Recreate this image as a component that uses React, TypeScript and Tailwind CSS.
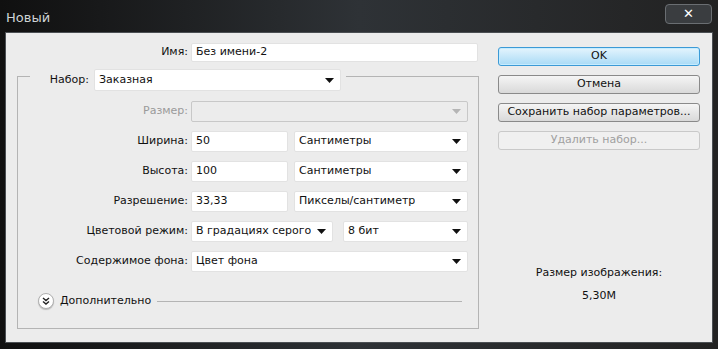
import React from 'react';

const font = { fontFamily: '"DejaVu Sans", "Liberation Sans", sans-serif' };

const Arrow: React.FC<{ disabled?: boolean }> = ({ disabled }) => (
  <svg width="9" height="5" viewBox="0 0 9 5" className="shrink-0">
    <path d="M0 0H9L4.5 5Z" fill={disabled ? '#b5b5b5' : '#111'} />
  </svg>
);

const Select: React.FC<{ value?: string; width: string; disabled?: boolean }> = ({ value, width, disabled }) => (
  <div
    className={`${width} h-full flex items-center justify-between pl-[4px] pr-[6px] border rounded-[2px] ${
      disabled ? 'bg-[#ececec] border-[#c8c8c8]' : 'bg-white border-[#e2e2e2]'
    }`}
  >
    <span className="truncate">{value}</span>
    <Arrow disabled={disabled} />
  </div>
);

const Input: React.FC<{ value: string; width: string }> = ({ value, width }) => (
  <div className={`${width} h-full flex items-center pl-[4px] bg-white border border-[#e2e2e2] rounded-[2px]`}>
    {value}
  </div>
);

const Row: React.FC<{ label: string; disabled?: boolean; children: React.ReactNode }> = ({ label, disabled, children }) => (
  <div className="flex h-[21px] items-center">
    <div className={`w-[173px] text-right pr-[3px] ${disabled ? 'text-[#9a9a9a]' : ''}`}>{label}</div>
    <div className="flex h-full gap-[6px]">{children}</div>
  </div>
);

const Button: React.FC<{ children: React.ReactNode; primary?: boolean; disabled?: boolean }> = ({ children, primary, disabled }) => (
  <div
    className={`h-[19px] flex items-center justify-center rounded-[3px] border ${
      primary
        ? 'border-[#3c9ad6] bg-gradient-to-b from-[#e4f4fd] to-[#a9dbf6] shadow-[inset_0_0_0_1px_#c5ecff]'
        : disabled
        ? 'border-[#c9c9c9] bg-[#f0f0f0] text-[#a0a0a0]'
        : 'border-[#8a8a8a] bg-gradient-to-b from-[#f5f5f5] to-[#d9d9d9]'
    }`}
  >
    {children}
  </div>
);

export default function App() {
  return (
    <div
      className="w-[718px] h-[349px] flex flex-col bg-gradient-to-r from-[#101010] via-[#2e3236] to-[#222] text-[11px] text-[#111]"
      style={font}
    >
      {/* Title bar */}
      <div className="h-[32px] flex items-start justify-between pl-[6px] pr-[6px]">
        <div className="mt-[8px] text-[13px] text-[#cfd3d6]">Новый</div>
        <div className="mt-[4px] w-[47px] h-[20px] flex items-center justify-center border border-[#6a6e72] rounded-[4px] bg-[#3a3d40] text-white text-[13px] font-bold">
          ✕
        </div>
      </div>

      {/* Content */}
      <div className="mx-[5px] h-[311px] bg-[#ececec] border border-[#4b4f53] flex">
        {/* Left */}
        <div className="w-[486px] flex flex-col">
          <div className="flex h-[19px] mt-[10px] items-center">
            <div className="w-[185px] text-right pr-[3px]">Имя:</div>
            <Input value="Без имени-2" width="w-[287px]" />
          </div>

          {/* Group box */}
          <div className="ml-[11px] mt-[14px] w-[462px] h-[253px] border border-[#b4b4b4] flex flex-col">
            <div className="flex h-[22px] -mt-[8px] ml-[12px] items-center">
              <div className="w-[64px] h-full flex items-center justify-end pr-[5px] bg-[#ececec]">Набор:</div>
              <Select value="Заказная" width="w-[247px]" />
              <div className="w-[5px] h-full bg-[#ececec]" />
            </div>

            <div className="flex flex-col gap-[9px] mt-[10px]">
              <Row label="Размер:" disabled>
                <Select width="w-[277px]" disabled />
              </Row>
              <Row label="Ширина:">
                <Input value="50" width="w-[97px]" />
                <Select value="Сантиметры" width="w-[174px]" />
              </Row>
              <Row label="Высота:">
                <Input value="100" width="w-[97px]" />
                <Select value="Сантиметры" width="w-[174px]" />
              </Row>
              <Row label="Разрешение:">
                <Input value="33,33" width="w-[97px]" />
                <Select value="Пикселы/сантиметр" width="w-[174px]" />
              </Row>
              <Row label="Цветовой режим:">
                <div className="flex h-full gap-[10px]">
                  <Select value="В градациях серого" width="w-[142px]" />
                  <Select value="8 бит" width="w-[125px]" />
                </div>
              </Row>
              <Row label="Содержимое фона:">
                <Select value="Цвет фона" width="w-[277px]" />
              </Row>
            </div>

            <div className="flex items-center mt-[21px] ml-[20px]">
              <div className="w-[16px] h-[16px] rounded-full bg-white border border-[#b0b0b0] flex items-center justify-center shadow-[0_1px_1px_#bbb]">
                <svg width="8" height="8" viewBox="0 0 8 8">
                  <path d="M1 1L4 3.5L7 1M1 4.5L4 7L7 4.5" stroke="#222" strokeWidth="1.4" fill="none" />
                </svg>
              </div>
              <span className="ml-[6px]">Дополнительно</span>
              <div className="ml-[6px] w-[305px] h-px bg-[#b4b4b4]" />
            </div>
          </div>
        </div>

        {/* Right */}
        <div className="ml-[6px] w-[202px] flex flex-col">
          <div className="flex flex-col gap-[9px] mt-[14px]">
            <Button primary>OK</Button>
            <Button>Отмена</Button>
            <Button>Сохранить набор параметров...</Button>
            <Button disabled>Удалить набор...</Button>
          </div>
          <div className="mt-[115px] text-center">Размер изображения:</div>
          <div className="mt-[6px] text-center">5,30M</div>
        </div>
      </div>
    </div>
  );
}
